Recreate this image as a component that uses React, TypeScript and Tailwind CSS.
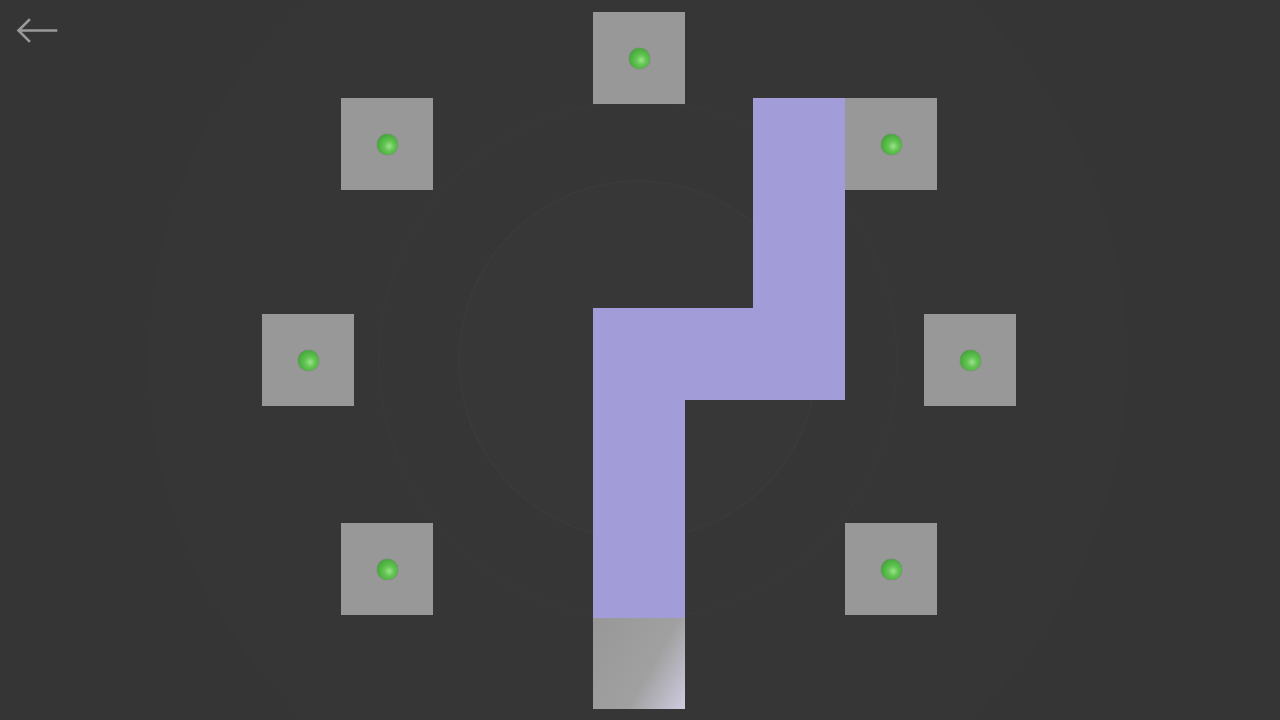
import React from "react";

const tiles: [number, number][] = [
  [593, 12],
  [341, 98],
  [845, 98],
  [262, 314],
  [924, 314],
  [341, 523],
  [845, 523],
];

function Tile({ x, y }: { x: number; y: number }) {
  return (
    <div
      className="absolute w-[92px] h-[92px] bg-[#999899] flex items-center justify-center"
      style={{ left: x, top: y }}
    >
      <div className="w-[21px] h-[21px] rounded-full bg-[radial-gradient(circle_at_58%_58%,#9be48a_0%,#62c452_30%,#46a83a_70%,#2f8528_100%)] shadow-[0_0_1px_rgba(0,0,0,0.4)]" />
    </div>
  );
}

export default function App() {
  return (
    <div className="relative w-[1280px] h-[720px] overflow-hidden bg-[#353535]">
      {/* subtle concentric rings */}
      <div className="absolute left-[148px] top-[-130px] w-[980px] h-[980px] rounded-full bg-[#363636]" />
      <div className="absolute left-[378px] top-[100px] w-[520px] h-[520px] rounded-full bg-[#363636] border-2 border-[#383838]" />
      <div className="absolute left-[458px] top-[180px] w-[360px] h-[360px] rounded-full bg-[#373737] border-2 border-[#3a3a3a]" />

      {/* back arrow */}
      <button className="absolute left-[14px] top-[16px] w-[46px] h-[30px]">
        <svg width="46" height="30" viewBox="0 0 46 30" fill="none">
          <path d="M42 14.5H5M15 4L4.5 14.5L15 25" stroke="#9a9a9a" strokeWidth="2.6" strokeLinecap="square" />
        </svg>
      </button>

      {tiles.map(([x, y], i) => (
        <Tile key={i} x={x} y={y} />
      ))}

      {/* bottom start tile */}
      <div className="absolute left-[593px] top-[617px] w-[92px] h-[92px] bg-[linear-gradient(120deg,#999899_0%,#a0a0a0_60%,#cfcce0_100%)]" />

      {/* purple path */}
      <div className="absolute left-[753px] top-[98px] w-[92px] h-[212px] bg-[#a29dd8]" />
      <div className="absolute left-[593px] top-[308px] w-[252px] h-[92px] bg-[#a29dd8]" />
      <div className="absolute left-[593px] top-[308px] w-[92px] h-[310px] bg-[#a29dd8]" />
    </div>
  );
}
